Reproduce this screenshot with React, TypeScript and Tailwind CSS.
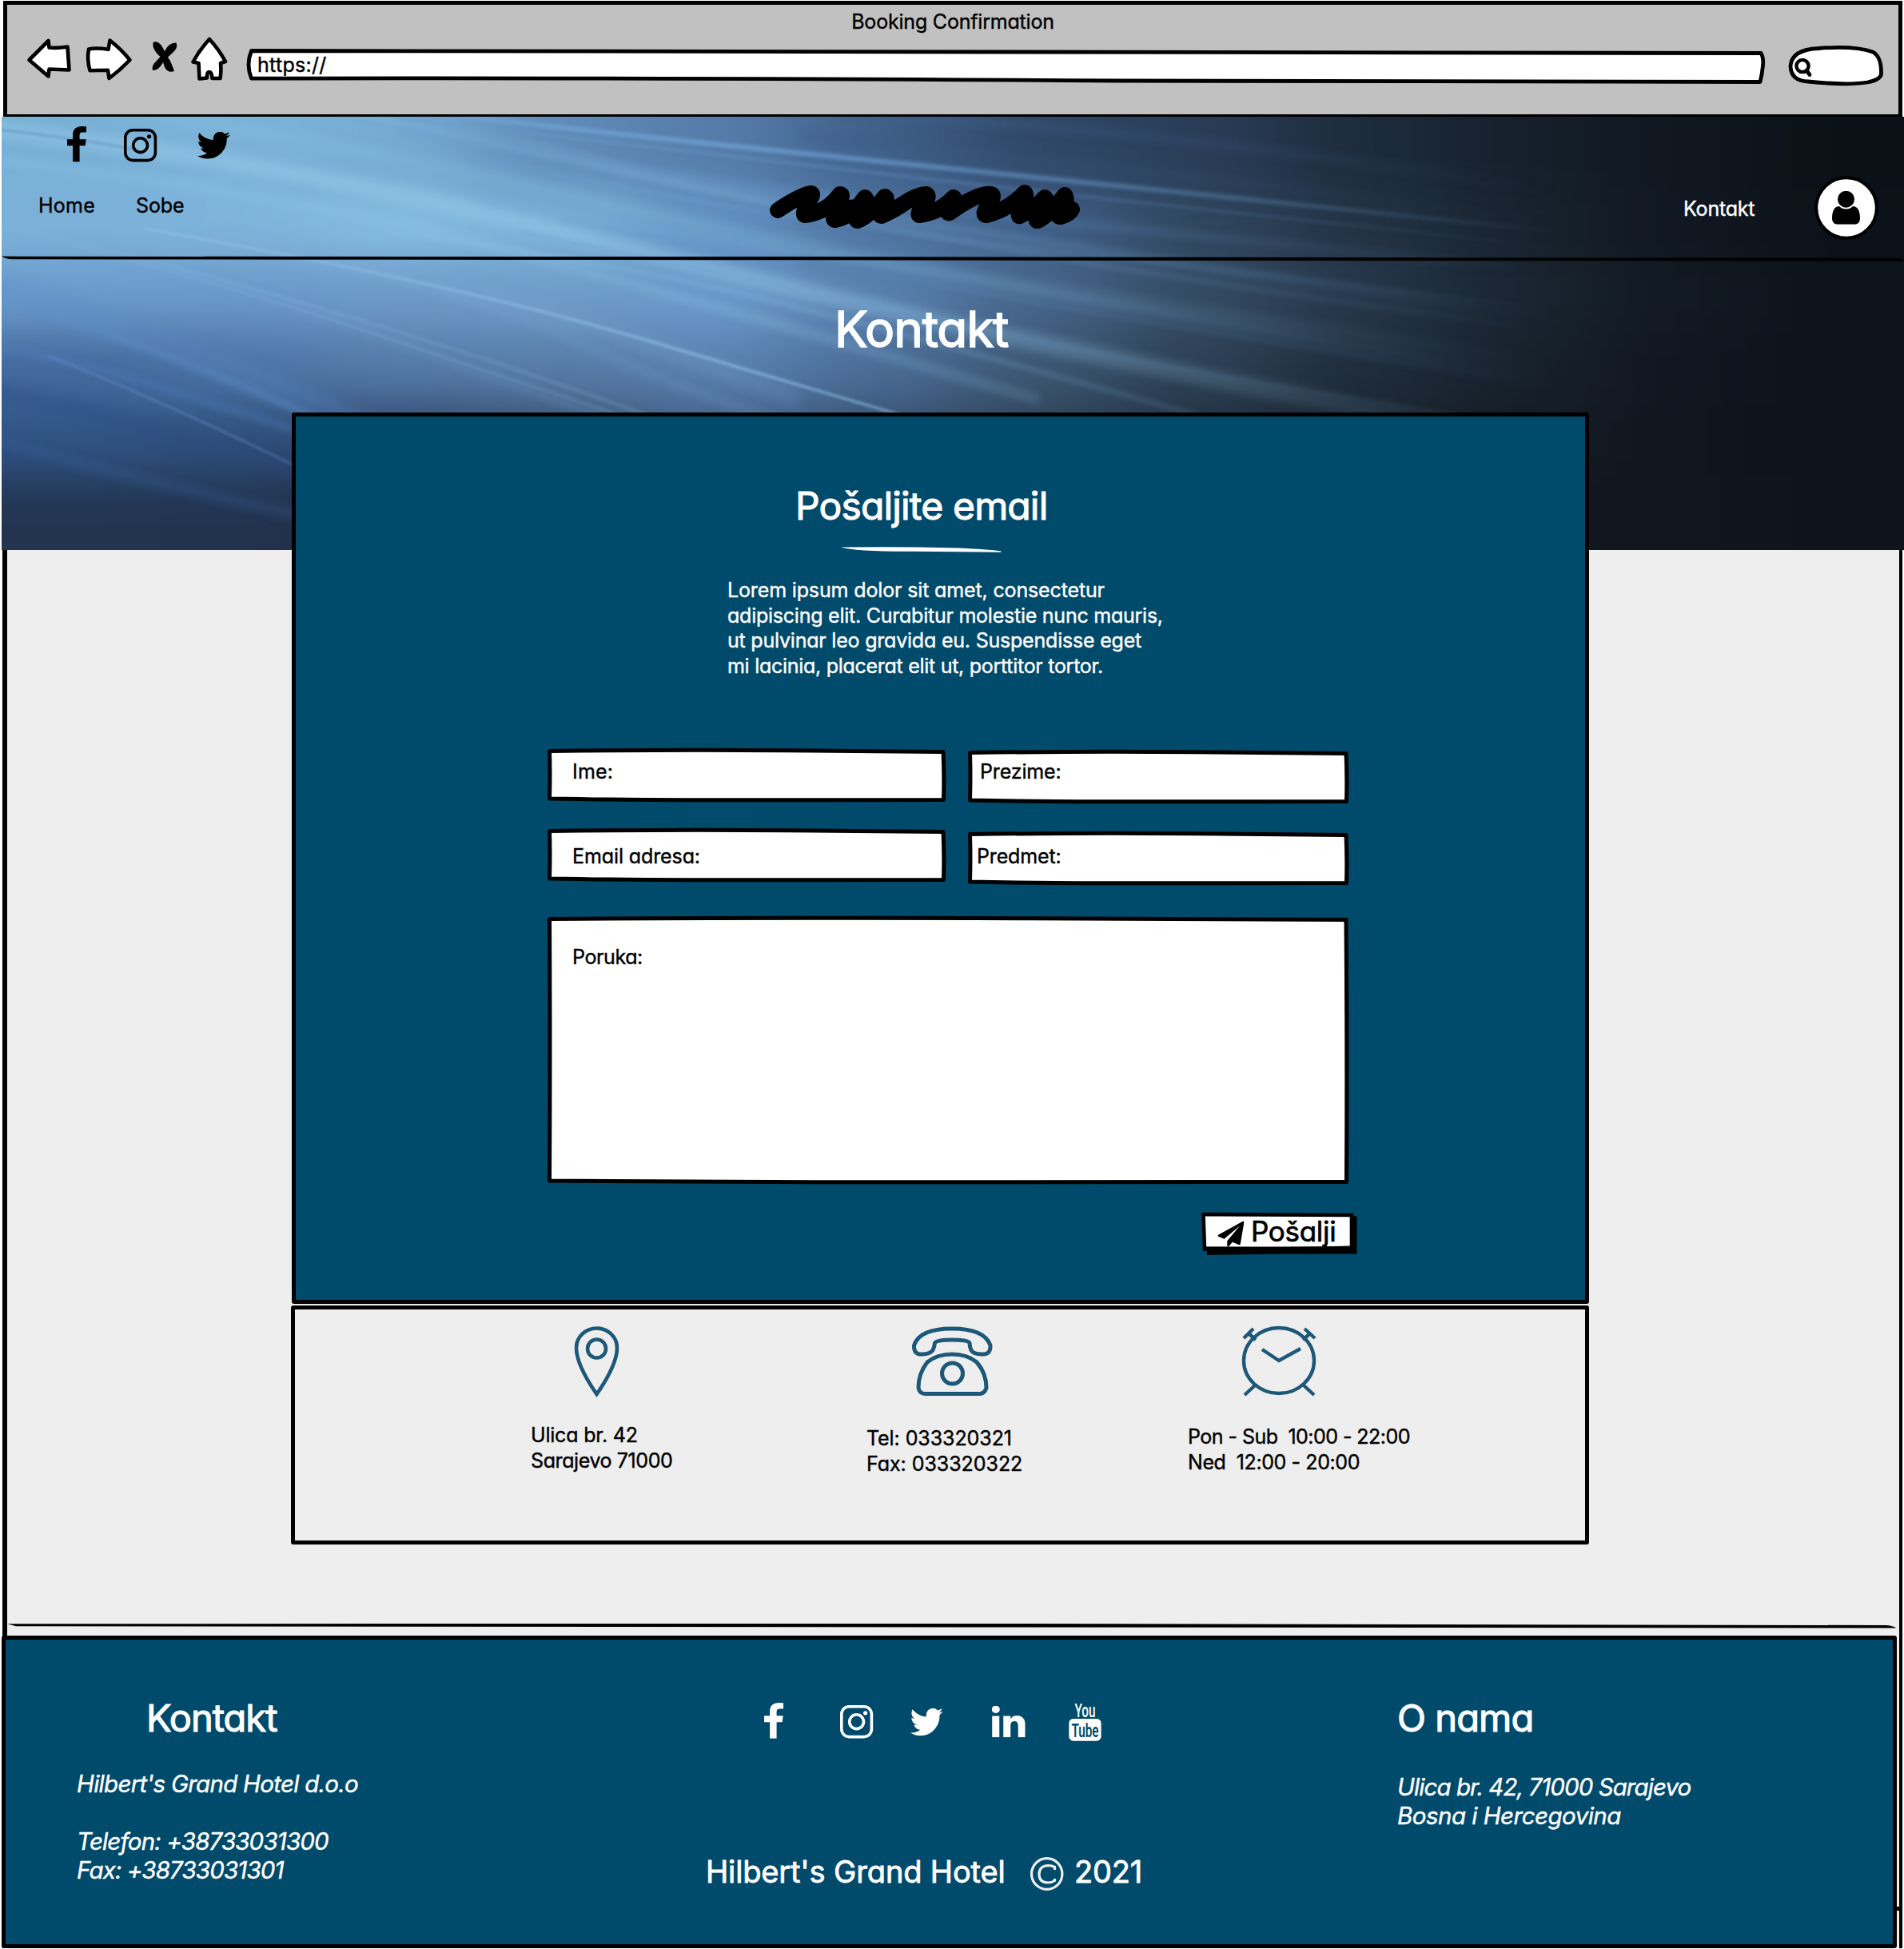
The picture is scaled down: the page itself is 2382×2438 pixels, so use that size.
import React from "react";

type ArtProps = { x: number; y: number; w: number; h: number; className?: string; children: React.ReactNode };

/* A fixed-size drawing whose viewBox starts at (x, y). */
function Art({ x, y, w, h, className = "", children }: ArtProps) {
  return (
    <svg className={`block shrink-0 ${className}`} width={w} height={h} viewBox={`${x} ${y} ${w} ${h}`} fill="none">
      {children}
    </svg>
  );
}

/* Hand-drawn rectangle outline that fills its parent. */
function SketchFrame({ w, h }: { w: number; h: number }) {
  const d = `M2.5 3.5 Q${w * 0.32} 1.6 ${w * 0.6} 2.8 T${w - 3} 4.5 Q${w - 1.6} ${h * 0.5} ${w - 2.5} ${h - 2.5} Q${w * 0.55} ${h - 1.8} ${w * 0.35} ${h - 2.2} T2.5 ${h - 4} Q3.4 ${h * 0.5} 2.5 3.5 Z`;
  return (
    <svg className="absolute inset-0 overflow-visible" width={w} height={h} viewBox={`0 0 ${w} ${h}`}>
      <path d={d} fill="#fff" stroke="#000" strokeWidth="5" strokeLinejoin="round" />
    </svg>
  );
}

type BoxProps = { x: number; y: number; w: number; h: number; vb: string; d: string; fill: string };
function Glyph({ x, y, w, h, vb, d, fill }: BoxProps) {
  return (
    <svg x={x} y={y} width={w} height={h} viewBox={vb} preserveAspectRatio="none">
      <path d={d} fill={fill} />
    </svg>
  );
}

const FB = "M1343 12v264h-157q-86 0-116 36t-30 108v189h293l-39 296h-254v759h-306v-759h-255v-296h255v-218q0-186 104-288.5t277-102.5q147 0 228 12z";
const TW = "M1684 408q-67 98-162 167 1 14 1 42 0 130-38 259.5t-115.5 248.5-184.5 210.5-258 146-323 54.5q-271 0-496-145 35 4 78 4 225 0 401-138-105-2-188-64.5t-114-159.5q33 5 61 5 43 0 85-11-112-23-185.5-111.5t-73.5-205.5v-4q68 38 146 41-66-44-105-115t-39-154q0-88 44-163 121 149 294.5 238.5t371.5 99.5q-8-38-8-74 0-134 94.5-228.5t228.5-94.5q140 0 236 102 109-21 205-78-37 115-142 178 93-10 186-50z";
const LI = "M477 625v991h-330v-991h330zm21-306q1 73-50.5 122t-135.5 49h-2q-82 0-132-49t-50-122q0-74 51.5-122.5t134.5-48.5 133 48.5 51 122.5zm1166 729v568h-329v-530q0-105-40.5-164.5t-126.5-59.5q-63 0-105.5 34.5t-63.5 85.5q-11 30-11 81v553h-329q2-399 2-647t-1-296l-1-48h329v144h-2q20-32 41-56t56.5-52 87-43.5 114.5-15.5q171 0 275 113.5t104 332.5z";
const PLANE = "M1764 11q33 24 27 64l-256 1536q-5 29-32 45-14 8-31 8-11 0-24-5l-453-185-242 295q-18 23-49 23-13 0-22-4-19-7-30.5-23.5t-11.5-36.5v-349l864-1059-1069 925-395-162q-37-14-40-55-2-40 32-59l1664-960q15-9 32-9 20 0 36 11z";
const USER = "M1536 1399q0 109-62.5 187t-150.5 78h-854q-88 0-150.5-78t-62.5-187q0-85 8.5-160.5t31.5-152 58.5-131 94-89 134.5-34.5q131 128 313 128t313-128q76 0 134.5 34.5t94 89 58.5 131 31.5 152 8.5 160.5zm-256-887q0 159-112.5 271.5t-271.5 112.5-271.5-112.5-112.5-271.5 112.5-271.5 271.5-112.5 271.5 112.5 112.5 271.5z";

function Instagram({ x, y, color }: { x: number; y: number; color: string }) {
  return (
    <g stroke={color} fill="none">
      <rect x={x + 1.8} y={y + 1.8} width="37.6" height="37.8" rx="9.5" strokeWidth="3.6" />
      <circle cx={x + 20.6} cy={y + 20.7} r="8.9" strokeWidth="3.6" />
      <circle cx={x + 31.6} cy={y + 9.8} r="2.6" fill={color} stroke="none" />
    </g>
  );
}

const MESH = [
  ["#79b0d5", "#7db3d9", "#76abd2", "#5f8ab7", "#567caa", "#3f608a", "#2f4766", "#293d58", "#1d2c3d", "#15202c", "#10171f", "#0b1117"],
  ["#7cb2da", "#7fb5db", "#86bee0", "#7db3da", "#6392c2", "#4f74a0", "#41618a", "#30465f", "#223345", "#18232f", "#101720", "#0c1219"],
  ["#6b9acb", "#6a98c8", "#6c99c8", "#6f9cca", "#6b9acb", "#5a82b0", "#46658a", "#344b63", "#26374b", "#192531", "#111922", "#0d131b"],
  ["#44699c", "#4c72a5", "#557aa8", "#587ba6", "#5a80b0", "#4a6c96", "#3c5773", "#2c3f54", "#1f2d3c", "#17212c", "#10161f", "#0e131b"],
  ["#2f5384", "#2e4f7b", "#2d4568", "#35506f", "#405d80", "#35506e", "#2c4054", "#223140", "#19242f", "#141c25", "#10161e", "#0e121a"],
  ["#223450", "#22334f", "#202d45", "#202d45", "#202d45", "#202d45", "#202d3d", "#1a2532", "#151d28", "#12171f", "#11151d", "#0f131b"],
];

/* path, colour, width, opacity, blur */
const RAYS: [string, string, number, number, number][] = [
  ["M-40 158 Q350 200 700 290 T1500 470 T2200 600", "#9bcdec", 22, 0.42, 6],
  ["M-40 196 Q350 240 620 310 T1300 500", "#8fc6e6", 14, 0.25, 5],
  ["M100 130 Q450 180 760 255 T1500 390 T2200 500", "#86bfe0", 16, 0.28, 6],
  ["M-40 158 Q80 170 170 187", "#5d93c4", 3, 0.6, 1.5],
  ["M400 130 Q700 200 1000 262 T1700 380 T2200 460", "#86bbe0", 8, 0.28, 3],
  ["M400 130 Q640 170 760 205 T1350 310 T2200 430", "#79a7d3", 12, 0.32, 4],
  ["M480 134 Q700 160 900 181 T1500 243 T2200 316", "#6fa3d6", 6, 0.8, 2],
  ["M500 148 Q850 187 1050 211 T1600 272 T2200 340", "#6b99cc", 4, 0.45, 2],
  ["M500 160 Q900 235 1200 265 T1800 325 T2300 380", "#6c9cd0", 12, 0.28, 4],
  ["M600 200 Q950 270 1200 300 T1800 370 T2300 430", "#6aa0d2", 6, 0.32, 2.5],
  ["M600 250 Q900 300 1200 350 T1800 450 T2300 520", "#77abd8", 10, 0.36, 4],
  ["M700 276 Q1000 325 1250 370 T1800 460 T2300 540", "#6d9bcc", 6, 0.32, 3],
  ["M650 290 Q950 350 1200 405 T1700 500 T2300 600", "#6fa3d2", 5, 0.35, 2],
  ["M180 286 Q550 350 800 423 T1300 570", "#8cbde4", 4, 0.65, 1.6],
  ["M480 290 Q680 315 850 350 T1500 520", "#8cc2e4", 6, 0.35, 3],
  ["M350 310 Q600 370 750 440 T1100 560", "#7fa8d8", 14, 0.16, 5],
  ["M100 310 Q350 370 560 450 T900 560", "#7fa8d8", 14, 0.16, 5],
  ["M-40 272 Q200 325 450 400 T1000 590", "#86b7dc", 4, 0.3, 2],
  ["M0 285 Q250 345 430 405 T900 560", "#86b7dc", 3, 0.2, 1.5],
  ["M250 300 Q600 340 1000 500", "#86aede", 24, 0.18, 8],
  ["M-40 360 Q180 425 400 525", "#5f92cc", 10, 0.5, 4],
  ["M-40 345 Q230 420 500 550", "#5d8ccb", 22, 0.3, 8],
  ["M-40 430 Q60 442 160 472 T500 580", "#4f7fc2", 10, 0.35, 4],
  ["M60 445 Q200 500 372 584", "#6b95cf", 3, 0.4, 1.5],
  ["M-40 485 Q160 520 400 600", "#2a4a80", 20, 0.3, 7],
  ["M-40 540 Q120 590 400 650", "#3d68a5", 12, 0.3, 6],
  ["M1050 140 Q1400 160 1750 210 T2300 290", "#43638f", 14, 0.4, 5],
  ["M1000 170 Q1500 215 1950 280 T2400 340", "#3c5a83", 10, 0.3, 5],
  ["M1000 275 Q1500 330 1900 400 T2400 490", "#48688f", 8, 0.3, 5],
  ["M1000 325 Q1450 390 1850 470 T2400 580", "#48688f", 10, 0.3, 5],
];

function HeroBackdrop() {
  return (
    <svg className="absolute inset-0" width="2380" height="542" viewBox="2 146 2380 542">
      <defs>
        <filter id="mesh" x="-400" y="-100" width="3200" height="1100" filterUnits="userSpaceOnUse" colorInterpolationFilters="sRGB">
          <feGaussianBlur stdDeviation="64 30" />
        </filter>
        {[1.5, 1.6, 2, 2.5, 3, 4, 5, 6, 7, 8].map((b) => (
          <filter key={b} id={`ray-${b * 10}`} x="-50" y="50" width="2500" height="700" filterUnits="userSpaceOnUse" colorInterpolationFilters="sRGB">
            <feGaussianBlur stdDeviation={b} />
          </filter>
        ))}
        <linearGradient id="fade" gradientUnits="userSpaceOnUse" x1="0" y1="0" x2="2382" y2="0">
          <stop offset="0" stopColor="#fff" />
          <stop offset="0.38" stopColor="#fff" />
          <stop offset="0.55" stopColor="#a0a0a0" />
          <stop offset="0.82" stopColor="#000" />
        </linearGradient>
        <mask id="rayMask" maskUnits="userSpaceOnUse" x="0" y="100" width="2400" height="620">
          <rect x="0" y="100" width="2400" height="620" fill="url(#fade)" />
        </mask>
      </defs>
      <g filter="url(#mesh)">
        {MESH.map((row, r) =>
          row.map((c, i) => {
            const top = r === 0 ? 0 : 146 + r * 90;
            const bottom = r === 5 ? 880 : 237 + r * 90;
            const left = i === 0 ? -300 : i * 200;
            const right = i === 11 ? 2700 : i * 200 + 201;
            return <rect key={`${r}-${i}`} x={left} y={top} width={right - left} height={bottom - top} fill={c} />;
          })
        )}
      </g>
      <g mask="url(#rayMask)">
        {RAYS.map(([d, c, w, o, b], i) => (
          <path key={i} d={d} stroke={c} strokeWidth={w} opacity={o} fill="none" filter={`url(#ray-${b * 10})`} />
        ))}
      </g>
    </svg>
  );
}

function Field({ w, h, className, label, labelClass }: { w: number; h: number; className: string; label: string; labelClass: string }) {
  return (
    <div className={`relative shrink-0 ${className}`}>
      <SketchFrame w={w} h={h} />
      <label className={`relative block w-max text-[25px] leading-8 text-black ${labelClass}`}>{label}</label>
    </div>
  );
}

function Toolbar() {
  return (
    <header className="ml-1 mt-px h-[145px] w-[2376px] shrink-0 border-x-[5px] border-b-[3px] border-t-[5px] border-black bg-[#c1c1c1]">
      <div className="flex justify-center pt-[5px] text-[25px] leading-8 text-black">
        <span className="tracking-[-0.2px]">Booking Confirmation</span>
      </div>
      <div className="flex pl-[21px]">
        <Art x={30} y={43} w={62} h={60}>
          <path d="M36.5 75 L60.5 51 L61.5 59.5 Q72 60.5 84.5 58.5 Q85.5 73 86.5 87.5 L61.5 86.5 L60.5 95.5 Z" fill="#fff" stroke="#000" strokeWidth="4.6" strokeLinejoin="round" />
        </Art>
        <Art x={104} y={43} w={66} h={60} className="ml-3">
          <path d="M111 61.5 Q120 59.5 135.5 61.8 L137.5 50.5 Q152 62 162.5 75 Q150 88 136.5 98 L135 87.8 L112.5 88.2 Q108.5 74 111 61.5 Z" fill="#fff" stroke="#000" strokeWidth="4.6" strokeLinejoin="round" />
        </Art>
        <Art x={186} y={43} w={40} h={60} className="ml-4">
          <path d="M191.5 53 Q197 50.5 202 57 L206 64 Q211 53 220.5 53.5 Q223 60 216 66 L210 71.5 Q214 77 218 89 Q210 92 206 84 L204 78 Q199 88 191 88 Q189 82 196 76 L200.5 71 Q190 62 191.5 53 Z" fill="#000" />
        </Art>
        <Art x={236} y={43} w={54} h={60} className="ml-2.5">
          <path d="M262 49 Q274 62 282 77 L276 79 Q277 89 275.5 98 L265.5 98 Q265 90 262 90 Q258.5 90 259 97.5 L249.5 98.5 L248.5 79 L241.5 77.5 Q250 62 262 49 Z" fill="#fff" stroke="#000" strokeWidth="4.6" strokeLinejoin="round" />
        </Art>
        <div className="relative ml-4 h-[68px] w-[1906px] shrink-0">
          <Art x={306} y={43} w={1906} h={68} className="absolute inset-0">
            <path d="M314.5 63.5 Q1200 62 2203 66.5 Q2206.5 72 2205.5 82 Q2204.5 93 2202 102.5 L1400 101 Q800 97 314.5 98.2 Q307.5 81 314.5 63.5 Z" fill="#fff" stroke="#000" strokeWidth="4.8" strokeLinejoin="round" />
          </Art>
          <div className="relative w-max pl-4 pt-[22px] text-[25px] leading-8 text-black"><span className="tracking-[0.3px]">https://</span></div>
        </div>
        <Art x={2232} y={43} w={130} h={70} className="ml-5">
          <path d="M2240 82 Q2242 62 2275 60.5 Q2320 57 2343 65 Q2354 71 2353.5 93 Q2352 100 2336 103 Q2310 107 2262 102 Q2240 101 2240 82 Z" fill="#fff" stroke="#000" strokeWidth="4.8" />
          <circle cx="2255" cy="82.5" r="7.6" stroke="#000" strokeWidth="4.4" />
          <path d="M2260 88 L2264 93.5" stroke="#000" strokeWidth="4.8" strokeLinecap="round" />
        </Art>
      </div>
    </header>
  );
}

function Hero() {
  return (
    <section className="relative ml-0.5 h-[542px] w-[2380px] shrink-0">
      <HeroBackdrop />
      <div className="relative flex h-[172px] items-start">
        <div className="w-[953px] shrink-0 pt-2.5">
          <div className="flex pl-20">
            <Art x={82} y={156} w={28} h={48}>
              <Glyph x={84} y={158} w={24} h={44.5} vb="479 0 864 1664" d={FB} fill="#000" />
            </Art>
            <Art x={153} y={156} w={45} h={48} className="ml-[43px]">
              <Instagram x={155} y={161} color="#000" />
            </Art>
            <Art x={244} y={156} w={48} h={48} className="ml-[46px]">
              <Glyph x={246.5} y={164.7} w={41.5} h={34} vb="108 256 1576 1280" d={TW} fill="#000" />
            </Art>
          </div>
          <nav className="flex pl-[46px] pt-[37px] text-[25px] leading-8 text-black">
            <a className="w-[122px]"><span className="tracking-[0.25px]">Home</span></a>
            <a><span className="tracking-[-0.1px]">Sobe</span></a>
          </nav>
        </div>
        <Art x={955} y={225} w={405} h={70} className="mt-[79px]">
          <path d="M973 263 Q1003 243 1015 242 Q1018 243 1013 250 Q1003 268 1007 269 Q1034 266 1051 243 Q1055 243 1051 250 Q1040 272 1044 275 Q1065 272 1082 247 Q1086 250 1080 258 Q1068 275 1073 276 Q1088 270 1107 246 Q1111 248 1106 258 Q1098 270 1103 270 Q1120 262 1130 255 Q1148 243 1159 243 Q1163 246 1157 253 Q1147 268 1150 269 Q1175 266 1193 247 Q1196 252 1188 260 Q1184 268 1188 266 Q1225 240 1240 243 Q1245 244 1237 256 Q1228 269 1234 269 Q1262 262 1282 241 Q1285 244 1280 256 Q1272 272 1276 270 Q1295 262 1307 247 Q1311 250 1303 262 Q1294 277 1298 276 Q1312 270 1332 244 Q1336 250 1330 260 Q1320 272 1327 271 Q1338 268 1341 262" stroke="#000" strokeWidth="20" strokeLinecap="round" strokeLinejoin="round" />
          <path d="M1045 262 L1105 258 M1285 258 L1335 262" stroke="#000" strokeWidth="22" />
        </Art>
        <a className="ml-[746px] w-[162px] shrink-0 pt-[99px] text-[25px] leading-8 text-white"><span className="tracking-[-0.2px]">Kontakt</span></a>
        <Art x={2268} y={218} w={84} h={84} className="mt-[72px]">
          <circle cx="2310" cy="260" r="37.8" fill="#fff" stroke="#000" strokeWidth="4" />
          <Glyph x={2292} y={238.7} w={35} h={42} vb="256 128 1280 1536" d={USER} fill="#000" />
        </Art>
      </div>
      <Art x={2} y={318} w={2380} h={12} className="relative">
        <path d="M2 320.5 Q8 321 1000 321 L2376 323 Q2382 324.5 2382 326.5 L1500 326 Q800 325 14 324.2 Q6 323.5 2 320.5 Z" fill="#000" />
      </Art>
      <h1 className="relative pl-[1042px] pt-[42px] text-[62px] font-normal leading-[80px] text-white [-webkit-text-stroke:1.6px_currentColor]"><span className="tracking-[-1.1px]">Kontakt</span></h1>
    </section>
  );
}

function ContactCard() {
  return (
    <section className="relative -mt-[172px] ml-[356px] h-[1115px] w-[1623px] shrink-0 rounded-[3px] border-[5px] border-black bg-[#004a6b] text-white">
      <h2 className="pl-[625px] pt-[82px] text-[48px] font-normal leading-[60px] [-webkit-text-stroke:1.1px_currentColor]"><span className="tracking-[-0.85px]">Pošaljite email</span></h2>
      <Art x={1050} y={682} w={206} h={12} className="ml-[680px] mt-[19px]">
        <path d="M1052 684.5 Q1150 683.5 1210 686 Q1240 687.5 1252.5 689.5 Q1253 691 1251 690.8 Q1200 690.5 1140 689.8 Q1070 690 1052 684.5 Z" fill="#fff" />
      </Art>
      <p className="ml-[540px] mt-[29px] w-max text-[25px] leading-[31.5px]">
        <span className="tracking-[-0.14px]">Lorem ipsum dolor sit amet, consectetur</span><br />
        <span className="tracking-[-0.24px]">adipiscing elit. Curabitur molestie nunc mauris,</span><br />
        <span className="tracking-[-0.21px]">ut pulvinar leo gravida eu. Suspendisse eget</span><br />
        <span className="tracking-[-0.28px]">mi lacinia, placerat elit ut, porttitor tortor.</span>
      </p>
      <form className="ml-[315px] mt-[87px] w-[1012px]">
        <div className="flex h-[100px] items-start">
          <Field w={498} h={67} className="h-[67px] w-[498px]" label="Ime:" labelClass="pl-[31px] pt-[13px] tracking-[0.2px]" />
          <Field w={476} h={67} className="ml-[28px] mt-[2px] h-[67px] w-[476px]" label="Prezime:" labelClass="pl-[15px] pt-[11px] tracking-[-0.15px]" />
        </div>
        <div className="flex h-[110px] items-start">
          <Field w={498} h={67} className="h-[67px] w-[498px]" label="Email adresa:" labelClass="pl-[31px] pt-[19px] tracking-[-0.1px]" />
          <Field w={476} h={67} className="ml-[28px] mt-1 h-[67px] w-[476px]" label="Predmet:" labelClass="pl-[11px] pt-[15px] tracking-[-0.14px]" />
        </div>
        <Field w={1002} h={335} className="h-[335px] w-[1002px]" label="Poruka:" labelClass="pl-[31px] pt-[35px] tracking-[-0.4px]" />
        <button type="button" className="relative ml-[816px] mt-[34px] flex h-14 w-[198px] items-start">
          <Art x={1501} y={1515} w={198} h={56} className="absolute inset-0">
            <path d="M1510 1520.5 L1697.5 1521.5 L1697.5 1568.5 Q1580 1568 1510 1570 Z" fill="#000" />
            <path d="M1505.5 1519 L1691 1520 L1691 1560.5 Q1620 1563 1507 1562 Z" fill="#fff" stroke="#000" strokeWidth="4.6" />
            <path d="M1505 1559.5 H1691 V1565 H1505 Z" fill="#000" />
            <Glyph x={1523.5} y={1527.5} w={33} h={32} vb="0 0 1792 1792" d={PLANE} fill="#000" />
          </Art>
          <span className="relative pl-[64px] pt-[5px] text-[35px] leading-[40px] text-black [-webkit-text-stroke:0.7px_currentColor]"><span className="tracking-[-0.3px]">Pošalji</span></span>
        </button>
      </form>
    </section>
  );
}

function InfoCard() {
  return (
    <section className="ml-[355px] mt-0.5 flex h-[299px] w-[1624px] shrink-0 rounded-[3px] border-[5px] border-black pl-[295px] text-[25px] leading-8 text-black">
      <div className="w-[420px] shrink-0 pt-[17px]">
        <Art x={714} y={1655} w={66} h={98} className="ml-[50px]">
          <g stroke="#1d5878" strokeWidth="4.6">
            <path d="M746.5 1744 Q721 1707 721 1686 A25.5 24.5 0 0 1 772 1686 Q772 1707 746.5 1744 Z" />
            <circle cx="746.5" cy="1687" r="11.5" />
          </g>
        </Art>
        <p className="mt-[26px]"><span className="tracking-[-0.2px]">Ulica br. 42</span><br /><span className="tracking-[-0.4px]">Sarajevo 71000</span></p>
      </div>
      <div className="w-[402px] shrink-0 pt-[17px]">
        <Art x={1135} y={1655} w={112} h={98} className="ml-[51px]">
          <g stroke="#1d5878" strokeWidth="5" strokeLinejoin="round">
            <path d="M1154 1694 Q1143 1695 1143.5 1683 Q1150 1662 1191 1662 Q1232 1662 1239 1683 Q1239.5 1695 1228 1694 Q1218 1694 1215 1689 Q1213 1684 1213 1680 Q1211 1676 1191 1676 Q1171 1676 1169.5 1680 Q1169 1685 1167 1689 Q1163 1694 1154 1694 Z" />
            <path d="M1157 1743.5 Q1150 1743 1149 1736 Q1149 1718 1160 1704 Q1172 1694 1191 1694 Q1210 1694 1222 1704 Q1234 1718 1234 1736 Q1232 1743 1226 1743.5 Z" />
            <circle cx="1191.5" cy="1718" r="13" />
          </g>
        </Art>
        <p className="mt-[30px]"><span className="tracking-[-0.08px]">Tel: 033320321</span><br /><span className="tracking-[-0.05px]">Fax: 033320322</span></p>
      </div>
      <div className="w-[300px] shrink-0 pt-[17px]">
        <Art x={1548} y={1655} w={106} h={98} className="ml-[62px]">
          <g stroke="#1d5878" strokeWidth="4.4">
            <ellipse cx="1600" cy="1702" rx="44" ry="41" />
            <path d="M1579 1688 L1600 1702 L1627 1687" />
            <path d="M1556 1674 L1568 1662 M1561 1667 L1571 1676 M1645 1674 L1632 1662 M1640 1667 L1630 1676" />
            <path d="M1570 1733 L1557 1745 M1631 1733 L1644 1745" />
          </g>
        </Art>
        <p className="mt-[28px] whitespace-pre"><span className="tracking-[-0.54px]">{"Pon - Sub  10:00 - 22:00"}</span><br /><span className="tracking-[-0.4px]">{"Ned  12:00 - 20:00"}</span></p>
      </div>
    </section>
  );
}

function Footer() {
  return (
    <footer className="relative -ml-[7px] mt-1.5 flex h-[391px] w-[2371px] shrink-0 rounded-[3px] border-[5px] border-black bg-[#004a6b] text-white">
      <div className="w-[876px] shrink-0 pt-[68px]">
        <h3 className="pl-[176px] text-[47px] font-normal leading-[60px] [-webkit-text-stroke:1.1px_currentColor]"><span className="tracking-[-1px]">Kontakt</span></h3>
        <address className="mt-[34px] whitespace-pre pl-[89px] text-[29.5px] italic leading-9">
          <span className="tracking-[-0.73px]">Hilbert's Grand Hotel d.o.o</span><br /><br /><span className="tracking-[-0.84px]">Telefon: +38733031300</span><br /><span className="tracking-[-0.85px]">Fax: +38733031301</span>
        </address>
      </div>
      <div className="w-[865px] shrink-0 pt-[75px]">
        <div className="flex pl-[71px]">
          <Art x={954} y={2126} w={28} h={54}><Glyph x={956} y={2130} w={24} h={44.7} vb="479 0 864 1664" d={FB} fill="#fff" /></Art>
          <Art x={1048} y={2126} w={47} h={54} className="ml-[66px]"><Instagram x={1051} y={2133} color="#fff" /></Art>
          <Art x={1136} y={2126} w={46} h={54} className="ml-[41px]"><Glyph x={1138.7} y={2136.7} w={41} h={34.5} vb="108 256 1576 1280" d={TW} fill="#fff" /></Art>
          <Art x={1238} y={2126} w={48} h={54} className="ml-14"><Glyph x={1240.7} y={2133.7} w={42} h={39.5} vb="128 148 1536 1468" d={LI} fill="#fff" /></Art>
          <Art x={1334} y={2126} w={48} h={54} className="ml-12 overflow-visible">
            <text x="1357.5" y="2147.5" textAnchor="middle" fontFamily="Roboto" fontSize="24" fontWeight="500" fill="#fff" textLength="26" lengthAdjust="spacingAndGlyphs">You</text>
            <rect x="1337.3" y="2150" width="40.3" height="27.7" rx="5.5" fill="#fff" />
            <text x="1357.5" y="2173" textAnchor="middle" fontFamily="Roboto" fontSize="24" fontWeight="600" fill="#004a6b" textLength="34" lengthAdjust="spacingAndGlyphs">Tube</text>
          </Art>
        </div>
        <div className="mt-[137px] flex text-[38px] font-normal leading-[48px] [-webkit-text-stroke:0.8px_currentColor]">
          <span className="w-[403px]"><span className="tracking-[-0.15px]">Hilbert's Grand Hotel</span></span>
          <Art x={1286} y={2317} w={48} h={52}>
            <ellipse cx="1309.7" cy="2344" rx="19.2" ry="19.4" stroke="#eee" strokeWidth="3.2" />
            <path d="M1319.5 2339 V2335.5 Q1316 2333.5 1311.5 2333.5 Q1300 2334 1300 2344.5 Q1300 2355 1311 2355 Q1316 2355 1319.5 2352.5 V2350" stroke="#eee" strokeWidth="3.2" />
          </Art>
          <span className="ml-2.5"><span className="tracking-[-0.15px]">2021</span></span>
        </div>
      </div>
      <div className="pt-[68px]">
        <h3 className="text-[47px] font-normal leading-[60px] [-webkit-text-stroke:1.1px_currentColor]"><span className="tracking-[-0.9px]">O nama</span></h3>
        <address className="mt-[38px] text-[29.5px] italic leading-9">
          <span className="tracking-[-0.93px]">Ulica br. 42, 71000 Sarajevo</span><br /><span className="tracking-[-0.52px]">Bosna i Hercegovina</span>
        </address>
      </div>
      <div className="absolute -right-2.5 top-[334px] h-[5px] w-1.5 bg-black" />
    </footer>
  );
}

export default function App() {
  return (
    <div className="flex h-[2438px] w-[2382px] flex-col overflow-hidden bg-white font-['Inter',sans-serif] [-webkit-text-stroke:0.4px_currentColor] [font-feature-settings:'cv11']">
      <Toolbar />
      <Hero />
      <main className="ml-[3px] flex h-[1749px] w-[2377px] shrink-0 flex-col border-l-[6px] border-r-4 border-black bg-[#eee]">
        <ContactCard />
        <InfoCard />
        <Art x={9} y={2028} w={2364} h={12} className="mt-24">
          <path d="M9 2031.2 L1200 2031 L2360 2033 Q2370 2034 2372 2036.5 L1200 2035.5 L20 2034.2 Z" fill="#000" />
        </Art>
        <Footer />
      </main>
    </div>
  );
}
